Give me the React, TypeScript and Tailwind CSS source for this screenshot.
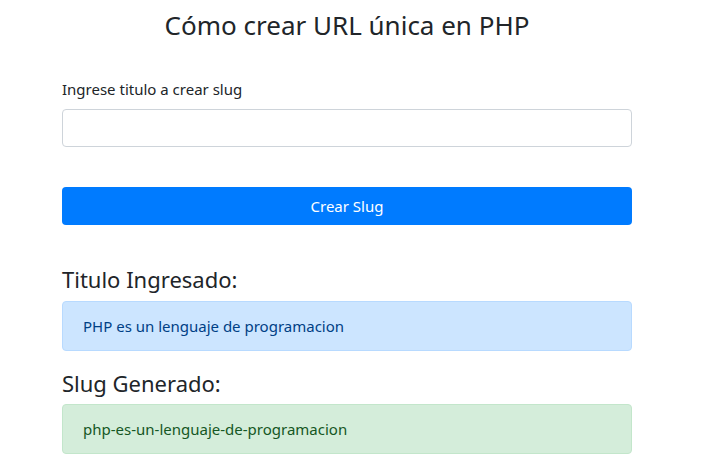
import { useState } from "react";

const font = { fontFamily: '"Noto Sans", "Segoe UI", sans-serif' };

function toSlug(s: string) {
  return s
    .toLowerCase()
    .normalize("NFD")
    .replace(/[\u0300-\u036f]/g, "")
    .replace(/[^a-z0-9]+/g, "-")
    .replace(/^-+|-+$/g, "");
}

export default function App() {
  const [title, setTitle] = useState("");
  const [entered, setEntered] = useState("PHP es un lenguaje de programacion");

  const slug = toSlug(entered);

  return (
    <main className="min-h-screen bg-white text-[#212529]" style={font}>
      <div className="ml-[62px] w-[570px] pt-[10px]">
        <h3 className="text-center text-[26px] leading-[1.2] font-normal text-[#212529]">
          Cómo crear URL única en PHP
        </h3>

        <form
          className="mt-[36px]"
          onSubmit={(e) => {
            e.preventDefault();
            if (title.trim()) setEntered(title);
          }}
        >
          <label htmlFor="titulo" className="block text-[15px] leading-6 mb-2">
            Ingrese titulo a crear slug
          </label>
          <input
            id="titulo"
            value={title}
            onChange={(e) => setTitle(e.target.value)}
            className="block w-full h-[38px] rounded border border-[#ced4da] px-3 text-base outline-none"
          />
          <button
            type="submit"
            className="mt-10 block w-full h-[38px] rounded bg-[#007bff] text-white text-[15px]"
          >
            Crear Slug
          </button>
        </form>

        <h4 className="mt-[41px] mb-2 text-[22px] leading-[1.2] font-normal">Titulo Ingresado:</h4>
        <div className="mb-[19px] rounded border border-[#b8daff] bg-[#cce5ff] px-5 py-3 text-[15px] leading-6 text-[#004085]">
          {entered}
        </div>

        <h4 className="mb-2 text-[22px] leading-[1.2] font-normal">Slug Generado:</h4>
        <div className="rounded border border-[#c3e6cb] bg-[#d4edda] px-5 py-3 text-[15px] leading-6 text-[#155724]">
          {slug}
        </div>
      </div>
    </main>
  );
}
